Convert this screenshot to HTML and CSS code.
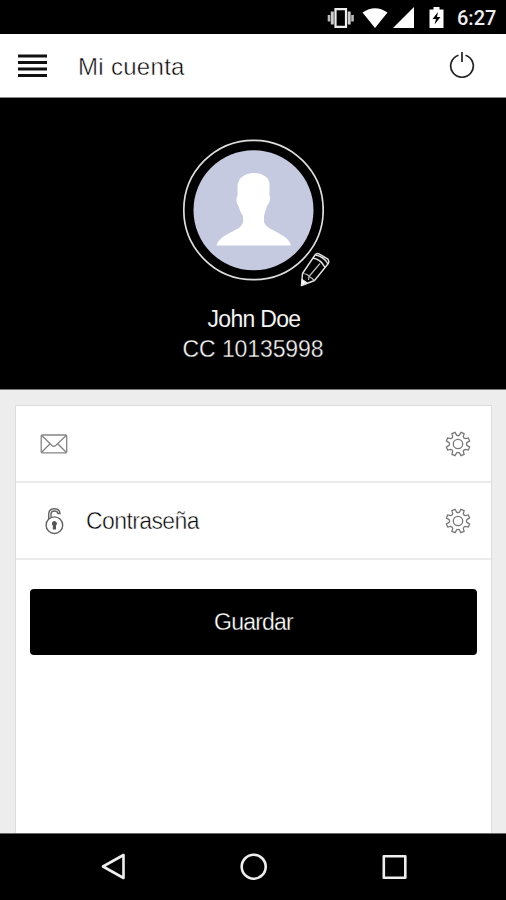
FILE: index.html
```html
<!DOCTYPE html>
<html lang="es">
<head>
<meta charset="utf-8">
<title>Mi cuenta</title>
<link rel="stylesheet" href="styles.css">
</head>
<body>
<svg class="defs" width="0" height="0">
  <symbol id="gear" viewBox="-13 -13 26 26">
    <path d="M-1.4-8.9Q0-7.9 1.4-8.9L3-11.6 6.1-10.3 5.3-7.3Q5.6-5.6 7.3-5.3L10.3-6.1 11.6-3 8.9-1.4Q7.9 0 8.9 1.4L11.6 3 10.3 6.1 7.3 5.3Q5.6 5.6 5.3 7.3L6.1 10.3 3 11.6 1.4 8.9Q0 7.9-1.4 8.9L-3 11.6-6.1 10.3-5.3 7.3Q-5.6 5.6-7.3 5.3L-10.3 6.1-11.6 3-8.9 1.4Q-7.9 0-8.9-1.4L-11.6-3-10.3-6.1-7.3-5.3Q-5.6-5.6-5.3-7.3L-6.1-10.3-3-11.6Z"/>
    <circle r="4.700"/>
  </symbol>
</svg>
<div class="screen">
  <div class="status">
    <svg class="vibrate" width="28" height="20" viewBox="0 0 28 20"><path d="M8.500 1.200h10.500v17.600H8.500z" fill="none" stroke="#eee" stroke-width="2.200"/><path d="M5.300 3.500v13M22.200 3.500v13" stroke="#ccc" stroke-width="3"/><path d="M2 7v6.500M25.500 7v6.500" stroke="#bbb" stroke-width="2.600"/></svg>
    <svg class="wifi" width="26" height="20" viewBox="0 0 26 20"><path d="M.5 4.500Q13-4 25.500 4.500L13 20Z"/></svg>
    <svg class="signal" width="21" height="21" viewBox="0 0 21 20" preserveAspectRatio="none"><path d="M21 0v20H0Z"/></svg>
    <svg class="battery" width="15" height="21" viewBox="0 0 15 21"><path d="M.5 2.500h4V0h6v2.500h4V21H.5Z"/><path d="M9 5l-5.500 7h3.500L5.500 17.500 11.500 10H8Z" fill="#000"/></svg>
    <span class="time">6:27</span>
  </div>
  <header class="header">
    <svg class="menu" width="29" height="24" viewBox="0 0 29 24"><path d="M0 2h29M0 8.500h29M0 15h29M0 21.500h29" stroke="#111" stroke-width="2.900"/></svg>
    <h1 class="title">Mi cuenta</h1>
    <svg class="power" width="26" height="28" viewBox="0 0 26 28"><path d="M9.500 4.200A11.300 11.300 0 1 0 16.500 4.200M13 1v10" fill="none" stroke="#222" stroke-width="1.700"/></svg>
  </header>
  <section class="profile">
    <div class="avatar">
      <svg width="142" height="142" viewBox="0 0 142 142"><circle cx="71.500" cy="71" r="69.700" fill="none" stroke="#ddd" stroke-width="1.700"/><circle cx="71.500" cy="71.200" r="60" fill="#c5cae0"/><path d="M72 34C80 34 87.500 38 87.500 45V57C89 58 87.500 65 85.500 66C84 71 82 74 82 78V83C84.500 92 106 94 109 106.500H34.500C38 94 60 92 61 83V77C59 74 57.500 71 56.500 67C54 65 54 58 55.500 57L55.500 47C56 39 63 34 72 34Z" fill="#fff"/></svg>
      <svg class="pencil" width="30" height="36" viewBox="0 0 30 36"><g fill="none" stroke="#e4e4e4" stroke-width="1.400" stroke-linejoin="round"><path d="M1.500 33.500L2.500 21.500 15 3Q16.500 .8 19 1.800L27.500 6.800Q29.500 9 28.300 11.500L14.500 28.500Z"/><path d="M13 6Q21 7.500 25 15.500M15.500 3Q24 4.500 28 12"/><path d="M2.500 21.500Q8 22 9 24.500 12 26 14.500 28.500M9 24.500L8.500 28M9 24.500L20 11.500" stroke="#bbb" stroke-width="1.200"/><path d="M1.500 33.500L2 27.500 6.500 30.500Z" fill="#fff"/></g></svg>
    </div>
    <div class="name">John Doe</div>
    <div class="doc">CC 10135998</div>
  </section>
  <main class="content">
    <div class="panel">
      <div class="row">
        <svg class="mail" width="28" height="20" viewBox="0 0 28 20"><g fill="none" stroke="#858585" stroke-width="1.300"><rect x="1.200" y="1" width="25.500" height="17.800" rx="1"/><path d="M1.700 1.500L12 11.500Q13.900 13 15.700 11.500L26.200 1.500M1.700 18.300L10 9.700M26.200 18.300L17.700 9.700"/></g></svg>
        <span class="label"></span>
        <svg class="gear" width="26" height="26"><use href="#gear"/></svg>
      </div>
      <div class="row">
        <svg class="lock" width="28" height="28" viewBox="0 0 28 28"><g fill="none" stroke="#626262" stroke-width="1.400"><circle cx="14.400" cy="18.200" r="8.300"/><path d="M8.700 12V7Q9 1.800 14.400 1.800Q19.500 1.800 20 6.500H18Q17.300 4 14.400 4Q11.200 4 11 7V10.500"/></g><path d="M14.400 14a2.600 2.600 0 0 1 1.600 4.600V22.500h-3.200v-3.900A2.600 2.600 0 0 1 14.400 14Z" fill="#555"/></svg>
        <span class="label">Contraseña</span>
        <svg class="gear" width="26" height="26"><use href="#gear"/></svg>
      </div>
      <button class="save">Guardar</button>
    </div>
  </main>
  <nav class="nav">
    <svg width="28" height="30" viewBox="0 0 28 30"><path d="M23.500 3v23L3 14.500Z"/></svg>
    <svg width="28" height="30" viewBox="0 0 28 30"><circle cx="13.700" cy="14.700" r="12"/></svg>
    <svg width="28" height="30" viewBox="0 0 28 30"><rect x="3.800" y="4.200" width="21.500" height="21.500"/></svg>
  </nav>
</div>
</body>
</html>
```
FILE: styles.css
```css
* { box-sizing: border-box; }
body { margin: 0; font-family: "Liberation Sans", Arial, sans-serif; background: #000; }
svg { display: block; flex: none; }
.defs { position: absolute; }
.screen { width: 506px; height: 900px; display: flex; flex-direction: column; overflow: hidden; background: #ededed; }

.status { height: 34px; flex: none; background: #000; display: flex; align-items: center; padding: 1px 0 0 327px; fill: #fff; }
.wifi { margin-left: 7px; }
.signal { margin-left: 5px; }
.battery { margin-left: 15px; margin-top: -1px; }
.time { margin-left: 13px; font: 500 20px/33px Roboto, sans-serif; color: #eee; padding-top: 1px; }

.header { height: 64px; flex: none; display: flex; align-items: center; padding-left: 18px; background: #fff; border-bottom: 1px solid #888; }
.title { margin: 2px 0 0 31px; width: 354px; font-size: 24px; font-weight: 400; line-height: 30px; letter-spacing: .3px; color: #000; -webkit-text-stroke: .5px #fff; }
.power { margin-left: 17px; margin-top: -1px; }

.profile { height: 292px; flex: none; background: #000; border-bottom: 1px solid #777; display: flex; flex-direction: column; align-items: center; padding-top: 41px; color: #f4f4f4; }
.avatar { position: relative; width: 142px; height: 142px; }
.pencil { position: absolute; left: 118px; top: 113px; }
.name { margin-top: 23px; padding-left: 2px; font-size: 23px; line-height: 30px; letter-spacing: -.7px; }
.doc { font-size: 23px; line-height: 30px; letter-spacing: -.1px; -webkit-text-stroke: .3px #000; }

.content { flex: 1; min-height: 0; padding: 15px 14px 0 15px; display: flex; }
.panel { flex: 1; background: #fff; border: 1px solid #ddd; border-bottom: 0; }
.row { height: 77px; display: flex; align-items: center; border-bottom: 2px solid #ebebeb; padding: 1px 20px 0 24px; }
.label { flex: 1; margin: 1px 0 0 18px; font-size: 23px; letter-spacing: -.6px; color: #000; -webkit-text-stroke: .5px #fff; }
.gear { fill: none; stroke: #777; stroke-width: 1.3; }
.save { display: block; width: 447px; height: 66px; margin: 29px 0 0 14px; border: 0; border-radius: 4px; background: #000; color: #fff; font: 23px "Liberation Sans", Arial, sans-serif; letter-spacing: -.8px; -webkit-text-stroke: .3px #000; }

.nav { height: 67px; flex: none; background: #000; border-top: 1px solid #666; display: flex; justify-content: space-between; padding: 18px 98px 0 100px; fill: none; stroke: #eee; stroke-width: 2.6; stroke-linejoin: round; }
```
